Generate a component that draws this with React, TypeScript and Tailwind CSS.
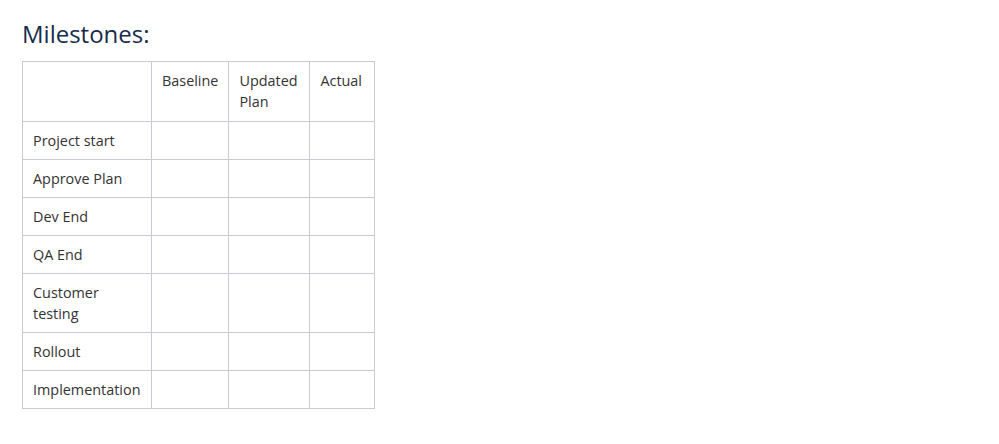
import React from 'react';

const rows: string[] = [
  'Project start',
  'Approve Plan',
  'Dev End',
  'QA End',
  'Customer testing',
  'Rollout',
  'Implementation',
];

const cell = 'border border-[#c8ccd2] px-[10px] py-[8px] align-top text-left font-normal';

const App = () => {
  return (
    <div
      className="min-h-[444px] bg-white pl-[22px] pt-[17px] text-[#172b4d]"
      style={{ fontFamily: '"Open Sans", "Noto Sans", sans-serif' }}
    >
      <h2 className="text-[24px] leading-[34px] font-normal mb-[10px]">Milestones:</h2>
      <table className="border-collapse table-fixed text-[14.4px] leading-[21px] text-[#333]">
        <colgroup>
          <col className="w-[129px]" />
          <col className="w-[77px]" />
          <col className="w-[81px]" />
          <col className="w-[65px]" />
        </colgroup>
        <thead>
          <tr>
            <th className={cell + ' pb-[9px]'}></th>
            <th className={cell + ' pb-[9px]'}>Baseline</th>
            <th className={cell + ' pb-[9px]'}>Updated Plan</th>
            <th className={cell + ' pb-[9px]'}>Actual</th>
          </tr>
        </thead>
        <tbody>
          {rows.map((r) => (
            <tr key={r}>
              <td className={cell}>{r}</td>
              <td className={cell}></td>
              <td className={cell}></td>
              <td className={cell}></td>
            </tr>
          ))}
        </tbody>
      </table>
    </div>
  );
};

export default App;
